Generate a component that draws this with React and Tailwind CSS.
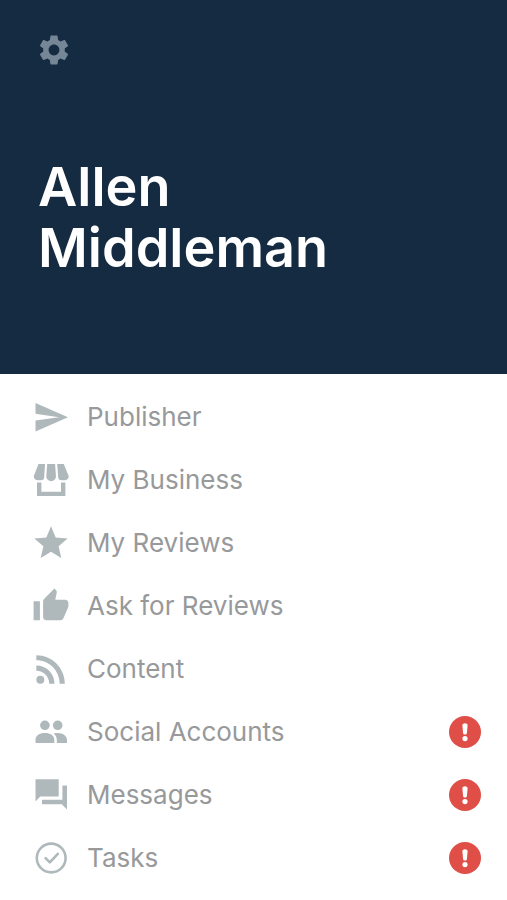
import React from 'react';
import { MdSettings, MdStar, MdThumbUp, MdRssFeed } from 'react-icons/md';

const SendIcon = ({ className }) => (
    <svg viewBox="0 0 36 36" fill="currentColor" className={className} aria-hidden="true">
        <path d="M2.500 4L35 18.200 2.500 32.400V21.600L26 18.200 2.500 14.800z" />
    </svg>
);

const StoreIcon = ({ className }) => (
    <svg viewBox="0 0 36 36" fill="currentColor" className={className} aria-hidden="true">
        <path d="M5.500 2H12l-.8 13a3.400 3.400 0 0 1-3.500 3.300H4.300A3.600 3.600 0 0 1 .9 13.800z" />
        <path d="M14.200 2h7.900l.9 12.400a4.800 4.800 0 0 1-9.700 0z" />
        <path d="M24.200 2h6.600l4.700 11.800a3.600 3.600 0 0 1-3.400 4.500h-3.400a3.400 3.400 0 0 1-3.500-3.300z" />
        <path d="M4 20.500h4.400v9.200h19.600v-9.200h4.400V34H4z" />
    </svg>
);

const PeopleIcon = ({ className }) => (
    <svg viewBox="0 0 36 36" fill="currentColor" className={className} aria-hidden="true">
        <circle cx="11.900" cy="11.300" r="4.800" />
        <circle cx="24.700" cy="11.300" r="4.800" />
        <path d="M2.500 29v-3.200c0-4.200 4-6.800 9.400-6.800s9.400 2.600 9.400 6.800V29z" />
        <path d="M20.600 19.400c1.300-.3 2.600-.4 4-.4 5.200 0 9.400 2.800 9.400 7V29H23.800v-3.200c0-2.800-1.200-4.900-3.200-6.400z" />
    </svg>
);

const ForumIcon = ({ className }) => (
    <svg viewBox="0 0 36 36" fill="currentColor" className={className} aria-hidden="true">
        <path d="M2.500 2.300h23.200v17.300H7.300l-4.800 5z" />
        <path d="M29.400 8.600H34v24l-5.200-5.400H9v-4.500h20.400z" />
    </svg>
);

const CheckIcon = ({ className }) => (
    <svg viewBox="0 0 36 36" fill="none" stroke="currentColor" strokeWidth="2.600" className={className} aria-hidden="true">
        <circle cx="18.200" cy="18" r="14.400" />
        <path d="M12.600 18.200l4.200 4.200 8-8.600" strokeLinecap="round" strokeLinejoin="round" />
    </svg>
);

const AlertBadge = () => (
    <svg viewBox="0 0 32 32" className="w-8 h-8 shrink-0" role="img" aria-label="Needs attention">
        <circle cx="16" cy="16" r="16" fill="#df4f48" />
        <path d="M16 7.300c1.700 0 2.700.9 2.600 2.300l-.7 7.400c-.1 1-.9 1.600-1.900 1.600s-1.800-.6-1.900-1.600l-.7-7.400c-.1-1.400.9-2.300 2.600-2.300z" fill="#fff" />
        <circle cx="16" cy="22.600" r="2.600" fill="#fff" />
    </svg>
);

const menuItems = [
    { label: 'Publisher', icon: SendIcon, size: 'w-9 h-9' },
    { label: 'My Business', icon: StoreIcon, size: 'w-9 h-9' },
    { label: 'My Reviews', icon: MdStar, size: 'w-10 h-10' },
    { label: 'Ask for Reviews', icon: MdThumbUp, size: 'w-[38px] h-[38px]' },
    { label: 'Content', icon: MdRssFeed, size: 'w-11 h-11' },
    { label: 'Social Accounts', icon: PeopleIcon, size: 'w-9 h-9', alert: true },
    { label: 'Messages', icon: ForumIcon, size: 'w-9 h-9', alert: true },
    { label: 'Tasks', icon: CheckIcon, size: 'w-9 h-9', alert: true },
];

const App = () => {
    return (
        <div className="min-h-screen bg-white font-['Inter',sans-serif]">
            <header className="bg-[#152b41] px-9 pt-8 pb-24">
                <button type="button" aria-label="Settings" className="block text-[#758797]">
                    <MdSettings className="w-9 h-9" />
                </button>
                <h1 className="mt-22 pl-0.5 text-[54px] leading-[61px] font-semibold text-white">
                    Allen
                    <br />
                    Middleman
                </h1>
            </header>

            <nav className="pt-[11px] pl-[27px] pr-[26px]">
                <ul>
                    {menuItems.map(({ label, icon: Icon, size, alert }) => (
                        <li key={label}>
                            <a href="#" className="flex items-center h-[63px] text-[26px] text-[#97999b]">
                                <span className="w-12 mr-3 flex justify-center shrink-0 text-[#afb9bb]">
                                    <Icon className={`${size} shrink-0`} />
                                </span>
                                <span className="flex-1">{label}</span>
                                {alert && <AlertBadge />}
                            </a>
                        </li>
                    ))}
                </ul>
            </nav>
        </div>
    );
};

export default App;
